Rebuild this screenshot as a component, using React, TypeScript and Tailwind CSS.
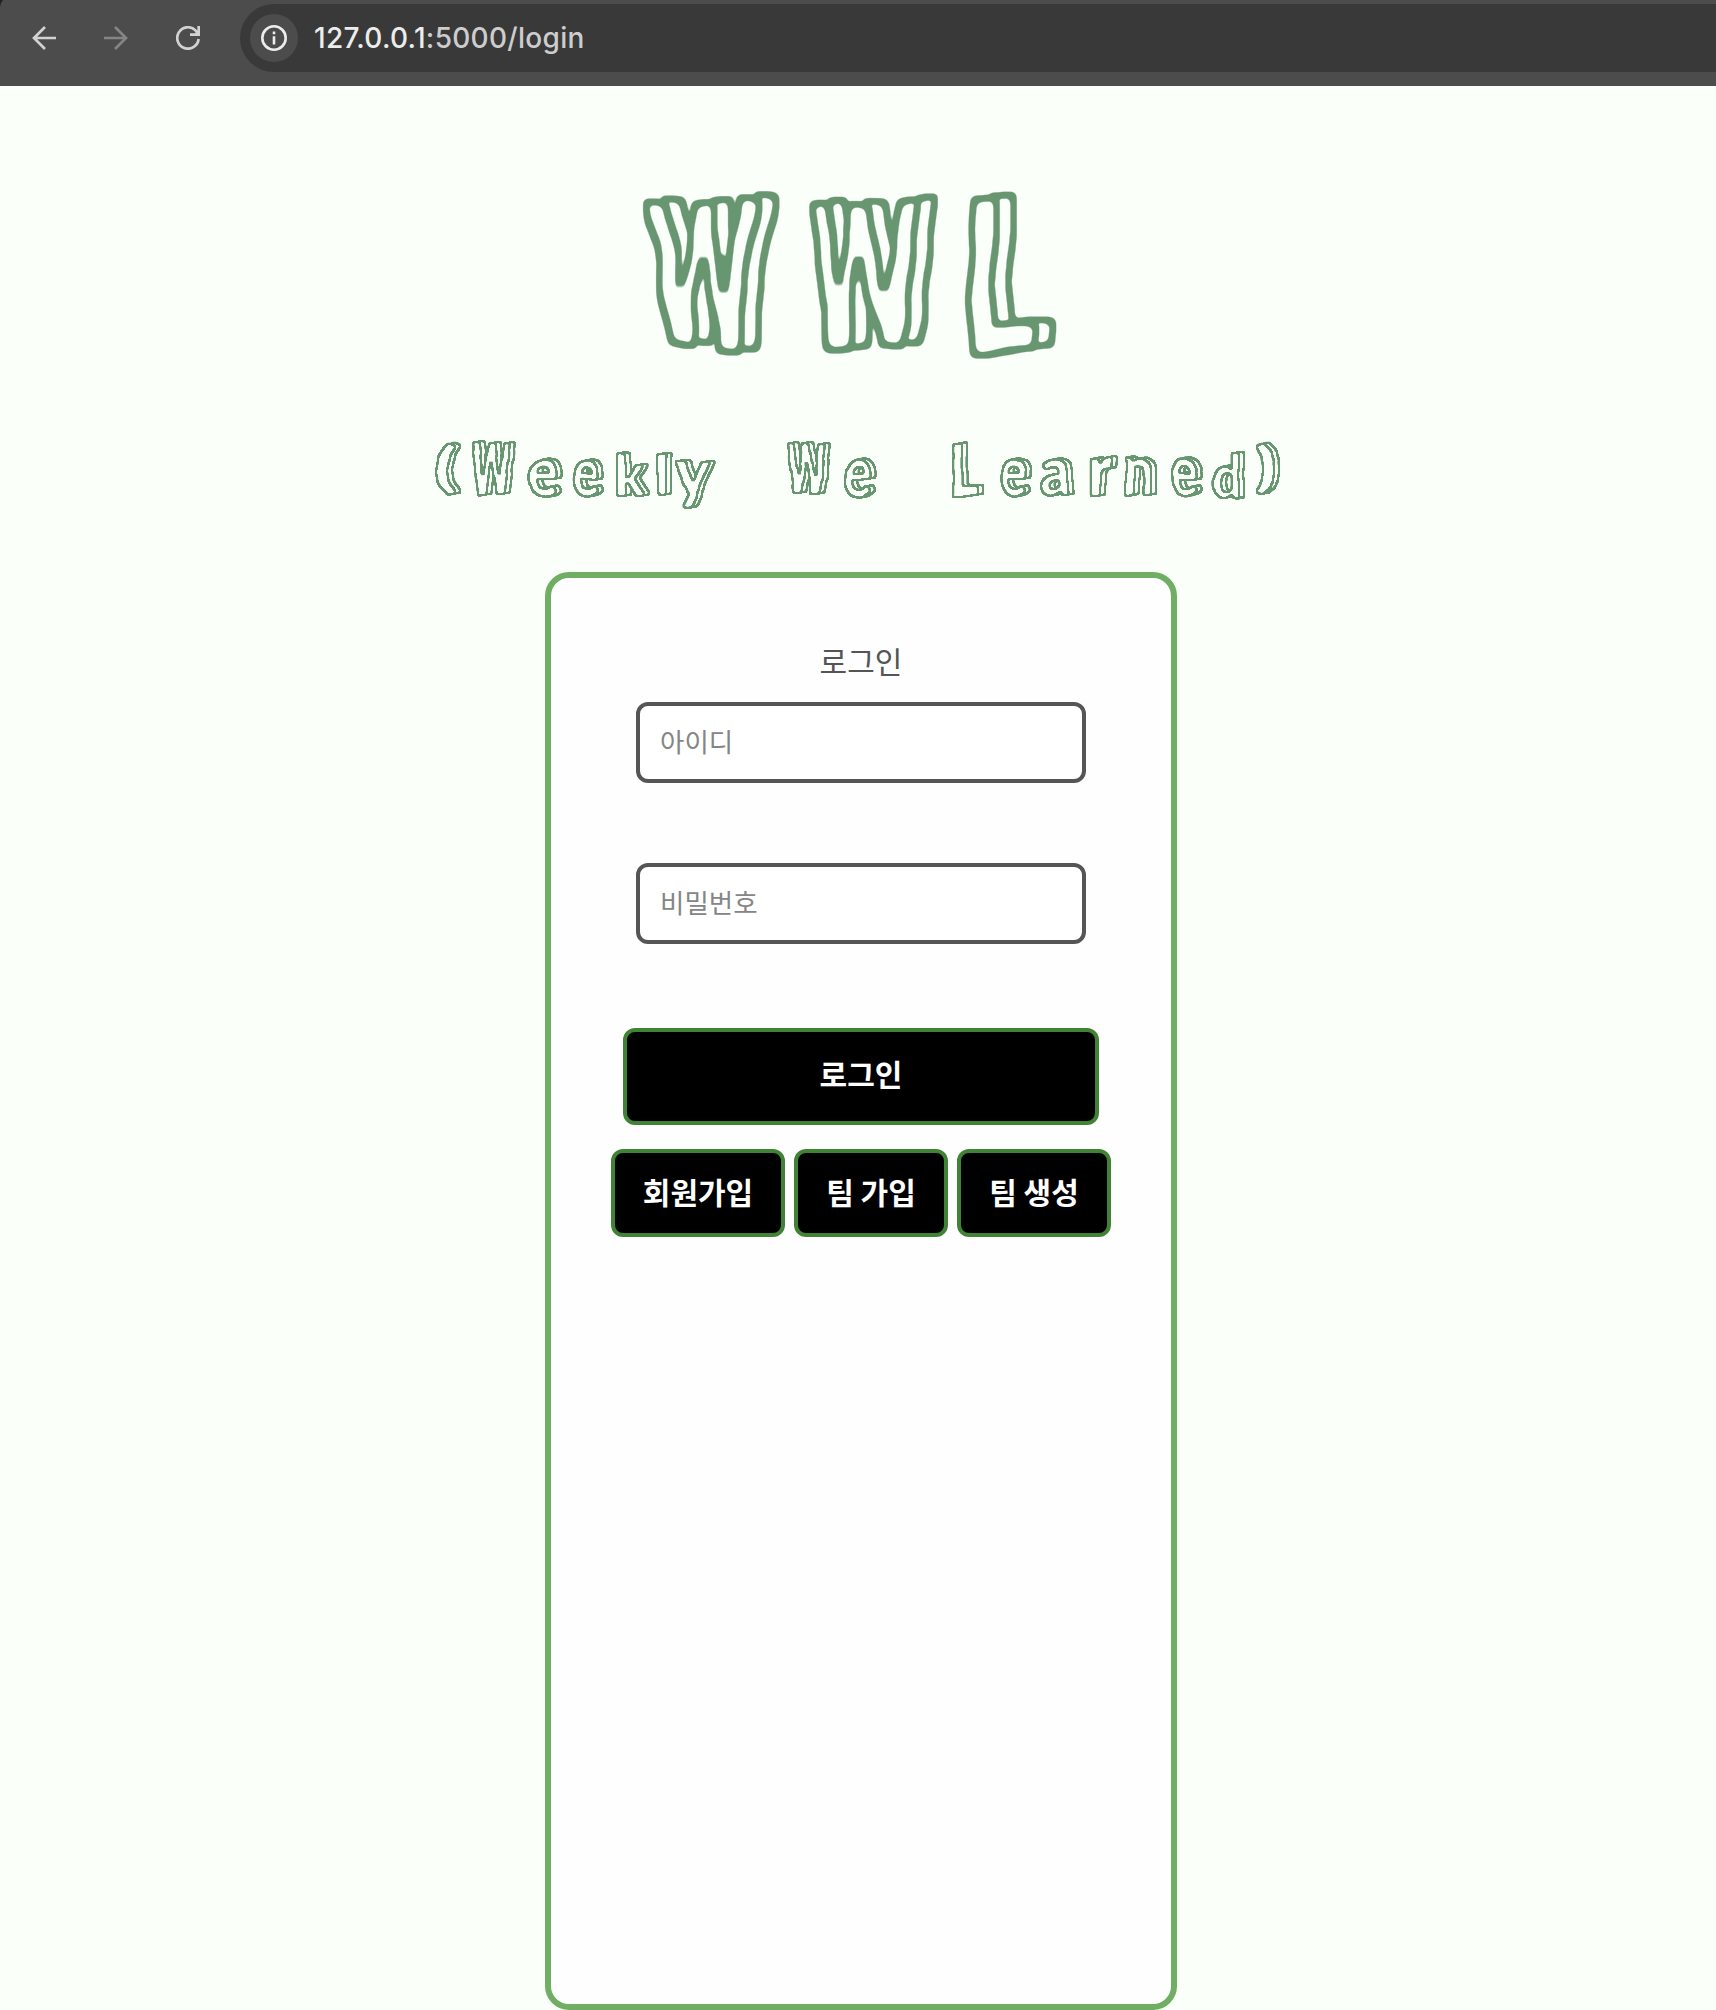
type Glyph = { ch: string; x: number; w: number; y: number; size: number; font?: string };

const GREEN = '#679671';
const WIDE = 'DejaVu Sans, sans-serif';

const titleGlyphs: Glyph[] = [
  { ch: 'W', x: 8, w: 110, y: 166, size: 197, font: WIDE },
  { ch: 'W', x: 168, w: 112, y: 166, size: 197, font: WIDE },
  { ch: 'L', x: 319, w: 79, y: 173, size: 212 },
];

// Letters sit at the irregular tracking of the hand-cut lettering.
const subtitleGlyphs: Glyph[] = [
  { ch: '(', x: 5, w: 25, y: 57, size: 56 },
  { ch: 'W', x: 43, w: 40, y: 64, size: 70, font: WIDE },
  { ch: 'e', x: 101, w: 28, y: 66, size: 70 },
  { ch: 'e', x: 144, w: 28, y: 66, size: 70 },
  { ch: 'k', x: 186, w: 31, y: 66, size: 58 },
  { ch: 'l', x: 227, w: 14, y: 66, size: 58 },
  { ch: 'y', x: 246, w: 37, y: 65, size: 66 },
  { ch: ' ', x: 310, w: 20, y: 65, size: 66 },
  { ch: 'W', x: 358, w: 40, y: 64, size: 70, font: WIDE },
  { ch: 'e', x: 416, w: 28, y: 66, size: 70 },
  { ch: ' ', x: 470, w: 20, y: 66, size: 66 },
  { ch: 'L', x: 521, w: 31, y: 66, size: 74 },
  { ch: 'e', x: 571, w: 28, y: 66, size: 70 },
  { ch: 'a', x: 612, w: 31, y: 65, size: 68 },
  { ch: 'r', x: 659, w: 25, y: 66, size: 74 },
  { ch: 'n', x: 695, w: 31, y: 65, size: 72 },
  { ch: 'e', x: 743, w: 28, y: 66, size: 70 },
  { ch: 'd', x: 784, w: 30, y: 69, size: 62 },
  { ch: ')', x: 825, w: 25, y: 57, size: 56 },
];

type BlockFilterProps = {
  id: string;
  r: number;
  dx: number;
  dy: number;
  wobble: number;
  freq: number;
  soft: number;
  edge: number;
  gain: number;
  cut: number;
};

// Turns solid letters into wobbly outlined blocks with a side face to the right.
function BlockFilter({ id, r, dx, dy, wobble, freq, soft, edge, gain, cut }: BlockFilterProps) {
  return (
    <filter id={id} x="0" y="0" width="100%" height="100%" filterUnits="userSpaceOnUse" colorInterpolationFilters="sRGB">
      <feTurbulence type="fractalNoise" baseFrequency={freq} numOctaves={1} seed={4} result="noise" />
      <feDisplacementMap in="SourceAlpha" in2="noise" scale={wobble} xChannelSelector="R" yChannelSelector="G" />
      <feGaussianBlur stdDeviation={soft} />
      <feComponentTransfer result="face">
        <feFuncA type="linear" slope={6} intercept={-2.2} />
      </feComponentTransfer>
      <feOffset in="face" dx={dx} dy={dy} result="side" />
      <feMorphology in="face" operator="dilate" radius={r} result="faceOut" />
      <feMorphology in="face" operator="erode" radius={r} result="faceIn" />
      <feComposite in="faceOut" in2="faceIn" operator="out" result="faceLine" />
      <feMorphology in="side" operator="dilate" radius={r} result="sideOut" />
      <feMorphology in="side" operator="erode" radius={r} result="sideIn" />
      <feComposite in="sideOut" in2="sideIn" operator="out" result="sideRing" />
      <feComposite in="sideRing" in2="face" operator="out" result="sideLine" />
      <feMerge>
        <feMergeNode in="sideLine" />
        <feMergeNode in="faceLine" />
      </feMerge>
      <feGaussianBlur stdDeviation={edge} />
      <feComponentTransfer result="lines">
        <feFuncA type="linear" slope={gain} intercept={cut} />
      </feComponentTransfer>
      <feFlood floodColor={GREEN} />
      <feComposite in2="lines" operator="in" />
    </filter>
  );
}

function Lettering({ glyphs, filter }: { glyphs: Glyph[]; filter: string }) {
  return (
    <g filter={filter}>
      <text fontFamily="Lato, sans-serif" fontWeight={900} xmlSpace="preserve">
        {glyphs.map((g, i) => (
          <tspan key={i} x={g.x} y={g.y} fontSize={g.size} fontFamily={g.font} fontWeight={g.font ? 700 : 900} textLength={g.w} lengthAdjust="spacingAndGlyphs">
            {g.ch}
          </tspan>
        ))}
      </text>
    </g>
  );
}

function BrowserBar() {
  return (
    <div className="relative flex h-[86px] w-full items-start bg-[#4c4c4c] pt-1">
      <svg className="absolute top-0 left-0 size-2" viewBox="0 0 8 8">
        <path d="M0 0h3Q0 3 0 7z" fill="#202020" />
      </svg>
      <div className="flex h-[68px] w-60 shrink-0 items-center gap-12 pl-8">
        <svg className="size-6" viewBox="0 0 24 24" fill="none" stroke="#d2d2d2" strokeWidth="2.7">
          <path d="M24 12H2M13 1 2 12l11 11" />
        </svg>
        <svg className="size-6" viewBox="0 0 24 24" fill="none" stroke="#858585" strokeWidth="2.7">
          <path d="M0 12h22M11 1l11 11-11 11" />
        </svg>
        <svg className="size-6" viewBox="0 0 24 24" fill="none" stroke="#d2d2d2" strokeWidth="2.7">
          <path d="M22.6 13A10.7 10.7 0 1 1 19.5 4.4l2 2.4" />
          <path d="M22.7 0v8.7H14" />
          <path d="M18 8.5 22.5 4v4.5z" fill="#d2d2d2" stroke="none" />
        </svg>
      </div>
      <div className="flex h-[68px] grow items-center rounded-l-full bg-[#393939] pl-2.5">
        <div className="flex size-12 items-center justify-center rounded-full bg-[#4c4c4c]">
          <svg className="size-[26px]" viewBox="0 0 26 26" fill="none" stroke="#ececec" strokeWidth="2.6">
            <circle cx="13" cy="13" r="11.7" />
            <path d="M13 11.2v8.2M13 6.6v2.6" />
          </svg>
        </div>
        <span className="ml-4 font-['Inter'] text-[28px] leading-none font-medium tracking-[0.3px] text-[#ececec]">
          127.0.0.1<span className="text-[#cdcdcd]">:5000/login</span>
        </span>
      </div>
    </div>
  );
}

const inputClass =
  'h-[81px] w-[450px] rounded-xl border-4 border-[#555555] bg-white px-5 pb-1 text-[26.5px] text-[#555555] outline-none placeholder:text-[#858585] placeholder:opacity-100';
const buttonClass =
  'flex items-center justify-center rounded-xl border-4 border-[#418334] bg-black text-[30px] leading-none font-bold text-white';

export default function App() {
  return (
    <div className="flex h-[2010px] w-[1716px] flex-col items-center overflow-hidden bg-[#fbfffa] font-['Noto_Sans_CJK_KR',sans-serif]">
      <BrowserBar />
      <h1 className="mt-[94px]">
        <svg className="block h-[190px] w-[436px] overflow-visible" viewBox="0 0 436 190">
          <BlockFilter id="title-block" r={3} dx={17} dy={-3} wobble={24} freq={0.016} soft={3} edge={1.2} gain={2.6} cut={-0.6} />
          <Lettering glyphs={titleGlyphs} filter="url(#title-block)" />
        </svg>
      </h1>
      <h2 className="mt-[60px]">
        <svg className="block h-[90px] w-[860px] overflow-visible" viewBox="0 0 860 90">
          <BlockFilter id="subtitle-block" r={1} dx={5} dy={-1} wobble={7} freq={0.034} soft={0.8} edge={0.6} gain={2.6} cut={-0.35} />
          <Lettering glyphs={subtitleGlyphs} filter="url(#subtitle-block)" />
        </svg>
      </h2>
      <main className="mt-[52px] ml-1.5 flex h-[1438px] w-[632px] shrink-0 flex-col items-center rounded-3xl border-6 border-[#6fae63] bg-[#fefefe] pt-[62px]">
        <div className="h-[62px] text-[30px] leading-[40px] text-[#555555]">로그인</div>
        <input className={inputClass} placeholder="아이디" />
        <input className={`${inputClass} mt-20`} type="password" placeholder="비밀번호" />
        <button className={`${buttonClass} mt-[84px] h-[97px] w-[476px] pb-2`}>로그인</button>
        <div className="mt-6 flex gap-[9px]">
          <button className={`${buttonClass} h-[88px] w-[174px] pb-1`}>회원가입</button>
          <button className={`${buttonClass} h-[88px] w-[154px] pb-1`}>팀 가입</button>
          <button className={`${buttonClass} h-[88px] w-[154px] pb-1`}>팀 생성</button>
        </div>
      </main>
    </div>
  );
}
